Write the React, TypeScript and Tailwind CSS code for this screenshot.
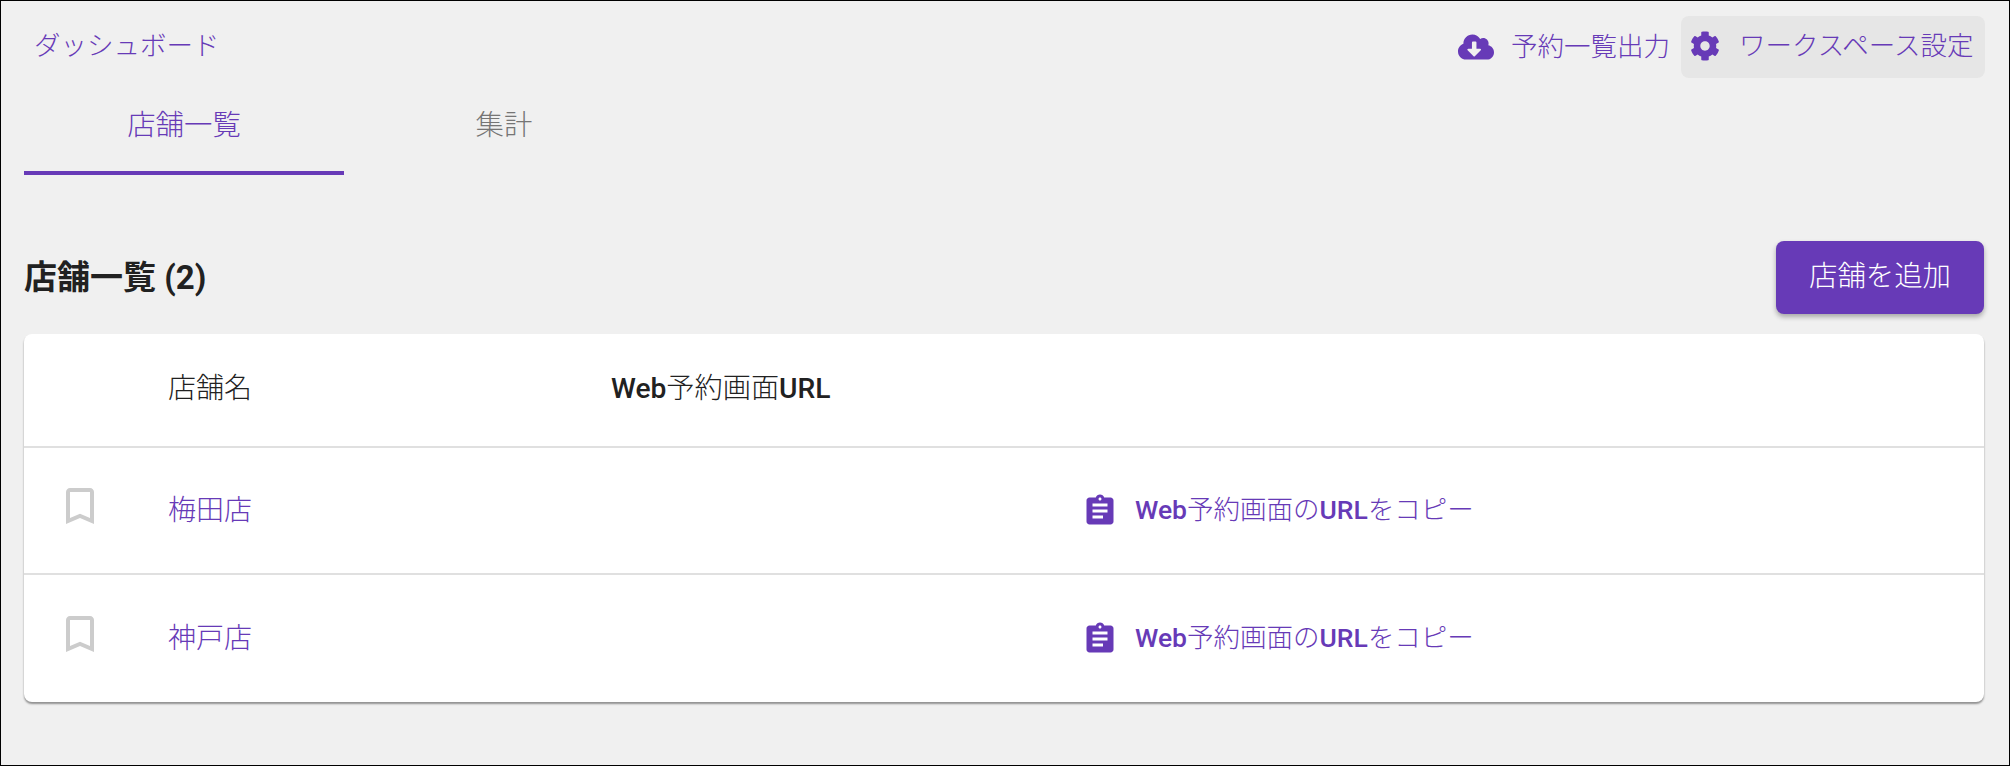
import { MdAssignment, MdBookmarkBorder } from 'react-icons/md'
import { FaCloudDownloadAlt, FaCog } from 'react-icons/fa'

const font = { fontFamily: 'Roboto, "Noto Sans CJK JP", sans-serif' }

const shops = ['梅田店', '神戸店']

export default function App() {
  return (
    <div className="h-[766px] w-[2010px] overflow-hidden border border-black bg-[#f0f0f0] px-[23px]" style={font}>
      <div className="flex h-[78px] items-start justify-between pt-[15px]">
        <a className="flex h-[60px] items-center pl-[10px] text-[26.5px] font-light text-[#673ab7]">ダッシュボード</a>
        <div className="flex items-center pr-[1px]">
          <button className="flex h-[60px] items-center gap-[17px] rounded-lg pr-[11px] text-[26.5px] font-light text-[#673ab7]">
            <FaCloudDownloadAlt size={36} />
            予約一覧出力
          </button>
          <button className="flex h-[62px] w-[304px] items-center gap-[19px] rounded-lg bg-[#e6e6e6] pb-[2px] pl-[9px] text-[26.5px] font-light text-[#673ab7]">
            <FaCog size={30} />
            ワークスペース設定
          </button>
        </div>
      </div>

      <div className="flex h-[96px] text-[28.4px] font-light">
        <div className="flex w-[320px] items-center justify-center border-b-4 border-[#673ab7] pt-[3px] text-[#673ab7]">店舗一覧</div>
        <div className="flex w-[320px] items-center justify-center pb-[1px] text-[#757575]">集計</div>
      </div>

      <div className="flex h-[159px] items-center justify-between pr-[2px] pt-[46px]">
        <h1 className="text-[33px] font-bold text-[#212121]">店舗一覧 (2)</h1>
        <button className="h-[73px] w-[208px] rounded-lg bg-[#673ab7] text-[28.4px] font-light text-white shadow-[0_3px_5px_rgba(0,0,0,0.3)]">
          店舗を追加
        </button>
      </div>

      <div className="mr-[2px] rounded-lg bg-white shadow-[0_2px_2px_rgba(0,0,0,0.4)]">
        <div className="flex h-[114px] items-center border-b-2 border-[#e0e0e0] pb-[2px]">
          <div className="w-[144px]" />
          <div className="w-[443px] text-[28px] font-light text-[#212121]">店舗名</div>
          <div className="text-[28.2px] font-light text-[#212121]">
            <span className="font-medium">Web</span>予約画面<span className="font-medium">URL</span>
          </div>
        </div>
        {shops.map((name, i) => (
          <div key={name} className={`flex h-[127px] items-center ${i === 0 ? 'border-b-2 border-[#e0e0e0]' : ''}`}>
            <div className="flex w-[144px] justify-center pb-[10px] pr-[33px]">
              <MdBookmarkBorder size={48} className="text-[#cccccc]" />
            </div>
            <a className="w-[914px] text-[28px] font-light text-[#673ab7]">{name}</a>
            <a className="flex items-center gap-[17px] text-[26.5px] font-light text-[#673ab7]">
              <MdAssignment size={36} />
              <span className="pb-[2px]">
                <span className="font-medium">Web</span>予約画面の<span className="font-medium">URL</span>をコピー
              </span>
            </a>
          </div>
        ))}
      </div>
    </div>
  )
}
